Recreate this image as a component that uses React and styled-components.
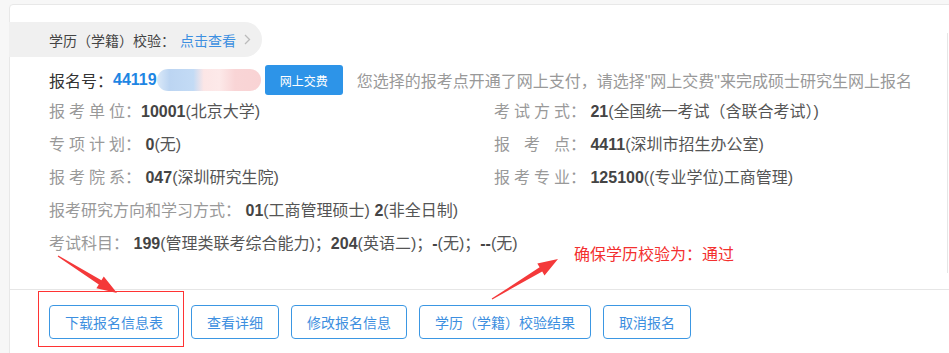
import React from "react";
import styled, { createGlobalStyle } from "styled-components";

const Global = createGlobalStyle`
  html, body { margin: 0; padding: 0; background: #f7f7f7; overflow: hidden; }
  body { font-family: "Liberation Sans", "Noto Sans CJK SC", sans-serif; color: #333; }
`;

const Page = styled.div`
  position: relative;
  width: 949px;
  height: 353px;
  padding: 4px 0 0 9px;
  box-sizing: border-box;
  overflow: hidden;
`;

const Card = styled.div`
  width: 960px;
  height: 400px;
  background: #fff;
  border: 1px solid #e8e8e8;
  border-radius: 4px;
  padding-top: 17px;
  box-sizing: border-box;
`;

const Body = styled.div`
  position: relative;
  padding-bottom: 29px;
  &::after {
    content: "";
    position: absolute;
    left: 937px;
    top: 11px;
    width: 1px;
    height: 240px;
    background: #e6e6e6;
  }
`;

const Pill = styled.div`
  display: flex;
  align-items: center;
  width: 253px;
  height: 35px;
  margin-left: -1px;
  padding-left: 40px;
  box-sizing: border-box;
  background: #f0f0f0;
  border-radius: 0 18px 18px 0;
  font-size: 14px;
  color: #444;
`;

const PillLink = styled.span`
  color: #3d8fe0;
  margin-left: 5px;
`;

const Chevron = styled.svg`
  margin-left: 8px;
  width: 7px;
  height: 11px;
`;

const Content = styled.div`
  padding-left: 39px;
`;

const RegRow = styled.div`
  display: flex;
  align-items: center;
  height: 30px;
  margin-top: 8px;
  font-size: 16px;
`;

const RegNo = styled.b`
  color: #1e86e3;
`;

const Mosaic = styled.span`
  display: inline-block;
  width: 104px;
  height: 22px;
  border-radius: 11px;
  background: linear-gradient(
    to right,
    #dbe9f8 0%,
    #bcd5f2 12%,
    #c3dbf5 35%,
    #fce6e6 45%,
    #fde9e9 60%,
    #f9d5d6 75%,
    #f9d3d4 100%
  );
`;

const PayButton = styled.button`
  height: 30px;
  margin-left: 4px;
  padding: 0 15px;
  border: none;
  border-radius: 3px;
  background: #2d94e8;
  color: #fff;
  font-family: inherit;
  font-size: 12px;
`;

const Hint = styled.span`
  margin-left: 14px;
  color: #999;
  font-size: 16px;
`;

const Grid = styled.div`
  display: grid;
  grid-template-columns: 445px 1fr;
  font-size: 16px;
  line-height: 33px;
`;

const Item = styled.div`
  grid-column: ${(p) => (p.$wide ? "1 / -1" : "auto")};
  white-space: nowrap;
  color: #555;
`;

const Label = styled.span`
  color: #999;
  ${(p) =>
    p.$w
      ? `display: inline-block; width: ${p.$w}px; text-align: justify; text-align-last: justify; vertical-align: top;`
      : ""}
`;

const Colon = styled.span`
  color: #999;
`;

const Val = styled.b`
  color: #444;
`;

const Footer = styled.div`
  display: flex;
  gap: 12px;
  border-top: 1px solid #e6e6e6;
  padding: 15px 0 0 39px;
`;

const OutlineButton = styled.button`
  height: 34px;
  padding: 0 15px;
  border: 1px solid #3b97e3;
  border-radius: 4px;
  background: #fff;
  color: #3d8fe0;
  font-family: inherit;
  font-size: 14px;
`;

const Overlay = styled.svg`
  position: absolute;
  left: 0;
  top: 0;
  pointer-events: none;
`;

const RedBox = styled.div`
  position: absolute;
  left: 38px;
  top: 291px;
  width: 146px;
  height: 56px;
  border: 1px solid #f33;
  box-sizing: border-box;
`;

const Note = styled.div`
  position: absolute;
  left: 574px;
  top: 244px;
  line-height: 22px;
  font-size: 16px;
  color: #f3302f;
  white-space: nowrap;
`;

const Field = ({ label, w, space, children, wide }) => (
  <Item $wide={wide}>
    <Label $w={w}>{label}</Label>
    <Colon>：</Colon>
    {space ? " " : ""}
    {children}
  </Item>
);

export default function App() {
  return (
    <>
      <Global />
      <Page>
        <Card>
          <Body>
            <Pill>
              学历（学籍）校验：<PillLink>点击查看</PillLink>
              <Chevron viewBox="0 0 7 11">
                <path d="M1 1 L5.5 5.5 L1 10" fill="none" stroke="#bbb" strokeWidth="1.3" />
              </Chevron>
            </Pill>
            <Content>
              <RegRow>
                报名号：<RegNo>44119</RegNo>
                <Mosaic />
                <PayButton>网上交费</PayButton>
                <Hint>您选择的报考点开通了网上支付，请选择"网上交费"来完成硕士研究生网上报名</Hint>
              </RegRow>
              <Grid>
                <Field label="报考单位" w={76}>
                  <Val>10001</Val>(北京大学)
                </Field>
                <Field label="考试方式" w={76} space>
                  <Val>21</Val>(全国统一考试（含联合考试）)
                </Field>
                <Field label="专项计划" w={76} space>
                  <Val>0</Val>(无)
                </Field>
                <Field label="报考点" w={76} space>
                  <Val>4411</Val>(深圳市招生办公室)
                </Field>
                <Field label="报考院系" w={76} space>
                  <Val>047</Val>(深圳研究生院)
                </Field>
                <Field label="报考专业" w={76} space>
                  <Val>125100</Val>((专业学位)工商管理)
                </Field>
                <Field label="报考研究方向和学习方式" wide space>
                  <Val>01</Val>(工商管理硕士) <Val>2</Val>(非全日制)
                </Field>
                <Field label="考试科目" wide space>
                  <Val>199</Val>(管理类联考综合能力)；<Val>204</Val>(英语二)；<Val>-</Val>(无)；<Val>--</Val>(无)
                </Field>
              </Grid>
            </Content>
          </Body>
          <Footer>
            <OutlineButton>下载报名信息表</OutlineButton>
            <OutlineButton>查看详细</OutlineButton>
            <OutlineButton>修改报名信息</OutlineButton>
            <OutlineButton>学历（学籍）校验结果</OutlineButton>
            <OutlineButton>取消报名</OutlineButton>
          </Footer>
        </Card>
        <RedBox />
        <Note>确保学历校验为：通过</Note>
        <Overlay width="949" height="353" viewBox="0 0 949 353">
          <polygon
            fill="#f4393a"
            points="57.7,256.4 98.8,284.5 96.4,288.3 117,293 103.8,276.5 101.4,280.3 58.3,255.6"
          />
          <polygon
            fill="#f4393a"
            points="492.3,299.4 542.2,271.5 544.5,275.4 558,259 537.3,263.4 539.6,267.3 491.7,298.6"
          />
        </Overlay>
      </Page>
    </>
  );
}
